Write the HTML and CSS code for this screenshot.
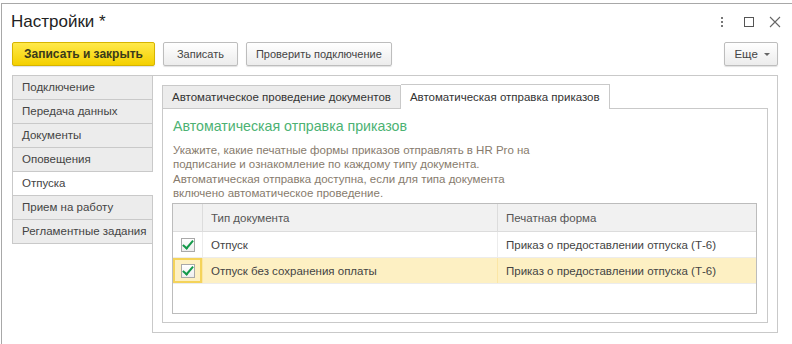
FILE: index.html
```html
<!DOCTYPE html>
<html lang="ru">
<head>
    <meta charset="UTF-8">
    <title>Настройки</title>
    <link rel="stylesheet" href="styles.css">
</head>
<body>
    <div class="window">
        <div class="titlebar">
            <h1 class="title">Настройки *</h1>
            <div class="win-controls">
                <span class="ctl">
                    <svg width="10" height="12" viewBox="0 0 10 12"><rect x="4" y="1" width="2" height="2" fill="#777"/><rect x="4" y="5" width="2" height="2" fill="#777"/><rect x="4" y="9" width="2" height="2" fill="#777"/></svg>
                </span>
                <span class="ctl">
                    <svg width="12" height="12" viewBox="0 0 12 12"><rect x="1.5" y="1.5" width="9" height="9" fill="none" stroke="#555" stroke-width="1"/></svg>
                </span>
                <span class="ctl">
                    <svg width="12" height="12" viewBox="0 0 12 12"><path d="M1 1 L11 11 M11 1 L1 11" stroke="#666" stroke-width="1.1"/></svg>
                </span>
            </div>
        </div>

        <div class="toolbar">
            <button class="btn btn-primary">Записать и закрыть</button>
            <button class="btn">Записать</button>
            <button class="btn">Проверить подключение</button>
            <button class="btn btn-more">Еще <span class="caret"></span></button>
        </div>

        <div class="workspace">
            <ul class="nav">
                <li>Подключение</li>
                <li>Передача данных</li>
                <li>Документы</li>
                <li>Оповещения</li>
                <li class="active">Отпуска</li>
                <li>Прием на работу</li>
                <li>Регламентные задания</li>
            </ul>

            <div class="frame">
                <div class="tabs">
                    <div class="tab">Автоматическое проведение документов</div>
                    <div class="tab active">Автоматическая отправка приказов</div>
                </div>
                <div class="tab-panel">
                    <h2 class="panel-title">Автоматическая отправка приказов</h2>
                    <p class="hint">Укажите, какие печатные формы приказов отправлять в HR Pro на<br>
                        подписание и ознакомление по каждому типу документа.<br>
                        Автоматическая отправка доступна, если для типа документа<br>
                        включено автоматическое проведение.</p>

                    <div class="grid-box">
                        <table class="grid">
                            <thead>
                                <tr>
                                    <th class="col-check"></th>
                                    <th class="col-type">Тип документа</th>
                                    <th>Печатная форма</th>
                                </tr>
                            </thead>
                            <tbody>
                                <tr>
                                    <td class="col-check"><span class="check"></span></td>
                                    <td>Отпуск</td>
                                    <td>Приказ о предоставлении отпуска (Т-6)</td>
                                </tr>
                                <tr class="current">
                                    <td class="col-check focused"><span class="check"></span></td>
                                    <td>Отпуск без сохранения оплаты</td>
                                    <td>Приказ о предоставлении отпуска (Т-6)</td>
                                </tr>
                            </tbody>
                        </table>
                    </div>
                </div>
            </div>
        </div>
    </div>
</body>
</html>
```

FILE: styles.css
```css
/* Общие настройки */
body {
    margin: 0;
    font-family: "Liberation Sans", Arial, sans-serif;
    font-size: 11.5px;
    color: #333;
    background: #fff;
    overflow: hidden;
}

.window {
    margin: 3px 0 0 1px;
    height: 341px;
    box-sizing: border-box;
    border-top: 1px solid #a8a8a8;
    border-left: 1px solid #a8a8a8;
    padding: 0 14px 0 10px;
}

/* Заголовок окна */
.titlebar {
    display: flex;
    align-items: flex-start;
    justify-content: space-between;
    height: 38px;
    padding-top: 8px;
    box-sizing: border-box;
}

.title {
    margin: 0 0 0 -1px;
    font-size: 17px;
    font-weight: normal;
    line-height: 20px;
    color: #222;
}

.win-controls {
    display: flex;
    gap: 14px;
    padding-top: 4px;
    margin-right: -3px;
}

.ctl {
    display: block;
    width: 12px;
    height: 12px;
}

/* Панель кнопок */
.toolbar {
    display: flex;
    gap: 8px;
}

.btn {
    min-width: 75px;
    height: 24px;
    padding: 0 9px;
    font-family: inherit;
    font-size: 11px;
    color: #444;
    background: linear-gradient(#ffffff, #ececec);
    border: 1px solid #bdbdbd;
    border-radius: 2px;
    box-shadow: 0 1px 1px rgba(0, 0, 0, 0.12);
}

.btn-primary {
    padding: 0 11px;
    font-size: 12px;
    font-weight: bold;
    color: #3a3a1a;
    background: linear-gradient(#ffe94a, #f4d000);
    border-color: #d6b400;
}

.btn-more {
    min-width: 0;
    margin-left: auto;
    padding: 0 7px 0 9px;
    font-size: 11.5px;
}

.caret {
    display: inline-block;
    width: 0;
    height: 0;
    margin-left: 3px;
    vertical-align: middle;
    border-left: 3px solid transparent;
    border-right: 3px solid transparent;
    border-top: 3px solid #666;
}

/* Рабочая область */
.workspace {
    display: flex;
    margin-top: 9px;
    height: 258px;
}

.nav {
    list-style: none;
    margin: 0;
    padding: 0;
    width: 140px;
    flex-shrink: 0;
    font-size: 11.5px;
}

.nav li {
    height: 23px;
    line-height: 23px;
    padding-left: 9px;
    background: #ececec;
    border: 1px solid #c9c9c9;
    border-top: none;
    border-right: none;
    color: #444;
    white-space: nowrap;
}

.nav li:first-child {
    border-top: 1px solid #c9c9c9;
}

.nav li.active {
    position: relative;
    background: #fff;
    margin-right: -1px;
    z-index: 1;
}

.frame {
    flex: 1;
    border: 1px solid #c9c9c9;
    padding: 8px 9px 9px 9px;
    display: flex;
    flex-direction: column;
}

/* Вкладки */
.tabs {
    display: flex;
    align-items: flex-end;
    height: 24px;
}

.tab {
    height: 22px;
    line-height: 22px;
    padding: 0 9px;
    background: #ececec;
    border: 1px solid #c9c9c9;
    border-bottom: none;
    color: #333;
    white-space: nowrap;
}

.tab.active {
    height: 24px;
    line-height: 24px;
    background: #fff;
    border-left: none;
    position: relative;
    top: 1px;
    z-index: 1;
}

.tab-panel {
    flex: 1;
    border: 1px solid #c9c9c9;
    padding: 7px 10px 0 9px;
}

.panel-title {
    margin: 0 0 0 1px;
    font-size: 14.2px;
    font-weight: normal;
    line-height: 20px;
    color: #4cb273;
}

.hint {
    margin: 7px 0 0 1px;
    line-height: 14.3px;
    color: #877b6d;
}

/* Таблица */
.grid-box {
    margin-top: 3px;
    height: 111px;
    border: 1px solid #bcbcbc;
    box-sizing: border-box;
}

.grid {
    width: 100%;
    border-collapse: collapse;
}

.grid th {
    height: 27px;
    padding: 0 0 0 8px;
    text-align: left;
    font-weight: normal;
    color: #555;
    background: #f1f1f1;
    border-left: 1px solid #dcdcdc;
    border-bottom: 1px solid #dcdcdc;
}

.grid td {
    height: 25px;
    padding: 0 0 0 8px;
    color: #444;
    border-left: 1px solid #ececec;
    border-bottom: 1px solid #ececec;
}

.grid th:first-child,
.grid td:first-child {
    border-left: none;
}

.grid .col-check {
    width: 29px;
    padding: 0;
    text-align: center;
}

.grid .col-type {
    width: 286px;
}

.grid tr.current td {
    background: #fdf0c3;
    border-left-color: #fbe6a6;
}

.grid td.focused {
    background: #fce7a2;
    box-shadow: inset 0 0 0 2px #f4d35a;
}

.check {
    display: inline-block;
    position: relative;
    width: 12px;
    height: 12px;
    vertical-align: middle;
    border: 1px solid #a9a9a9;
    background: linear-gradient(#ffffff, #eeeeee);
}

.check::after {
    content: "";
    position: absolute;
    left: 3px;
    top: -1px;
    width: 4px;
    height: 9px;
    border-right: 2px solid #14994a;
    border-bottom: 2px solid #14994a;
    transform: rotate(40deg);
}
```
